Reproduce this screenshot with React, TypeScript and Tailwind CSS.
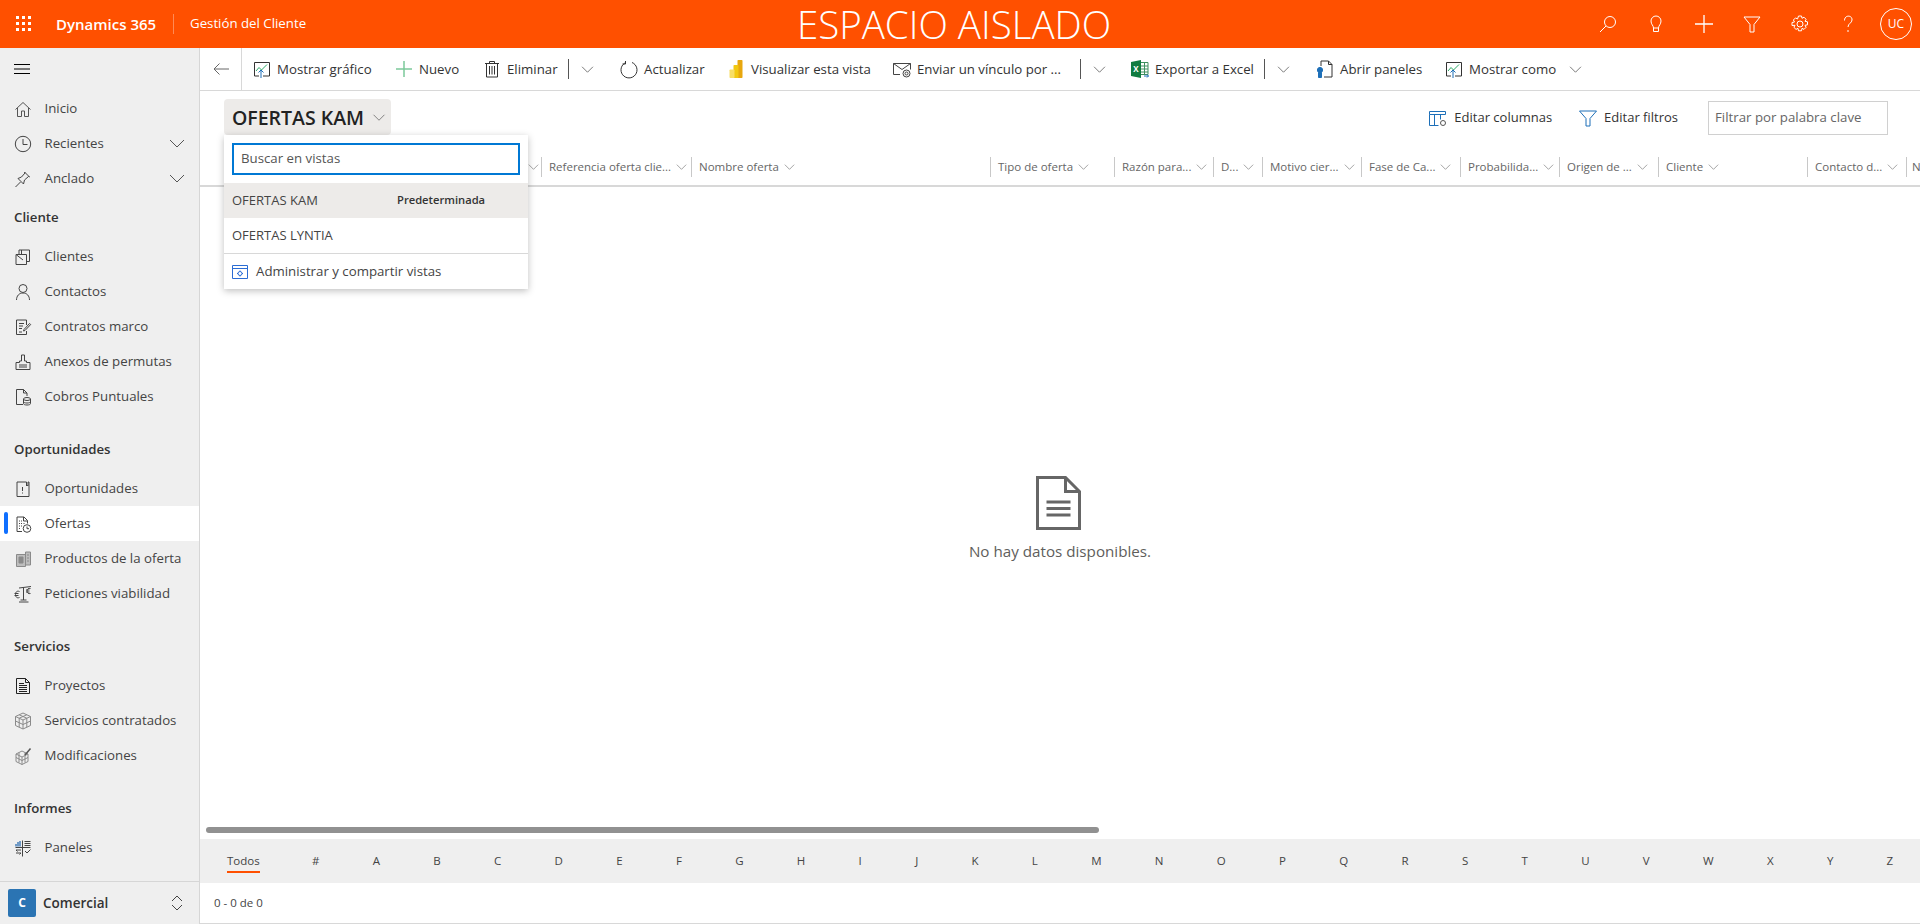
import type { ReactNode } from "react";

const FONT = "font-['Open_Sans','Liberation_Sans',sans-serif]";

function Chevron({ className }: { className: string }) {
  return (
    <svg className={className} viewBox="0 0 16 9" fill="none" stroke="currentColor" strokeWidth="1">
      <path d="M1 1l7 7 7-7" />
    </svg>
  );
}

function Glyph({ children, className = "h-[20px] w-[20px] text-[#444]" }: { children: ReactNode; className?: string }) {
  return (
    <svg className={className} viewBox="0 0 20 20" fill="none" stroke="currentColor" strokeWidth="1">
      {children}
    </svg>
  );
}

const chartIcon = (
  <Glyph className="h-[20px] w-[20px] text-[#333]">
    <path d="M7 17H2.500V3.500h15V17H11" />
    <path d="M4 12l3-3.500 2.500 2.500L15 5.500" stroke="#2aa866" />
    <path d="M9 19v-8M6.500 13.500L9 11l2.500 2.500" stroke="#1d6fb8" />
  </Glyph>
);

const sidebarIcons: Record<string, ReactNode> = {
  home: (
    <Glyph>
      <path d="M2.500 10.500L10 3.500l7.500 7M4.500 9v8.500h4V12h3v5.500h4V9" stroke="#555" />
    </Glyph>
  ),
  clock: (
    <Glyph>
      <circle cx="10" cy="10" r="7.700" />
      <path d="M10 5v5.500h4.500" />
    </Glyph>
  ),
  pin: (
    <Glyph>
      <path d="M2.500 18l5-5M5 9.500l5.500 5.500 1-4 4-3.500 1 .5-5-5 .5 1-3.500 4z" />
    </Glyph>
  ),
  clientes: (
    <Glyph>
      <path d="M3 7.500h10.500v10H3zM6 7.500V3h10.500v11.500h-3M8.500 3v4.500M3 7.500l7 5.500" />
    </Glyph>
  ),
  contacto: (
    <Glyph>
      <circle cx="10" cy="6.500" r="4" />
      <path d="M3.500 18c0-4 2.500-7 6.500-7s6.500 3 6.500 7" />
    </Glyph>
  ),
  contratos: (
    <Glyph>
      <path d="M13.500 8V3H3.500v14.500h10V14" />
      <path d="M6 6.500h5M6 9h4M6 11.500h3M6 15h3" />
      <path d="M11 12.500l5.500-6 1.200 1-5.700 6-1.500.5z" />
    </Glyph>
  ),
  anexos: (
    <Glyph>
      <path d="M3 17.500h14v-7h-3.500V9h-2V3h-3v6h-2v1.500H3zM6 13h8M6 15h8" />
    </Glyph>
  ),
  cobros: (
    <Glyph>
      <path d="M10 17.500H3.500v-15h7l3.500 3.500v3M10.500 2.500V6H14" />
      <ellipse cx="14" cy="12" rx="3.500" ry="1.500" />
      <path d="M10.500 12v4.500c0 1 1.500 1.500 3.500 1.500s3.500-.5 3.500-1.500V12M10.500 14.500c0 1 1.500 1.500 3.500 1.500s3.500-.5 3.500-1.500" />
    </Glyph>
  ),
  oportunidades: (
    <Glyph>
      <path d="M13.500 3H4v14.500h12V3h-1v4l-.8-.8-.7.8z" />
      <path d="M9.500 8v4M9.500 13.500v1" />
    </Glyph>
  ),
  ofertas: (
    <Glyph>
      <path d="M9 17.500H4V3h7l3.500 3.500v3M10.500 3v4h4" />
      <path d="M6 7h1M8 7h1M6 9.500h1M8 9.500h1M10.500 9.500h1M6 12h1M8 12h1M6 14.500h1" />
      <circle cx="14" cy="14.500" r="3.800" />
      <path d="M14 12.500v2.200h2" />
    </Glyph>
  ),
  productos: (
    <Glyph className="h-[20px] w-[20px] text-[#8a8a8a]">
      <path d="M3.500 5.500h9v12h-9zM12.500 3h5v13h-5z" fill="#bdbdbd" />
      <path d="M6 8h4v6H6zM14 6h2M14 9h2M14 12h2" fill="#8a8a8a" />
    </Glyph>
  ),
  peticiones: (
    <Glyph>
      <path d="M6 4l12-1.500M10.500 3.500V16M6 18h9.500M7.500 16h6" />
      <path d="M6.500 7.500C4 6.500 2.500 8 2.500 10.500s1.500 4 4 3M1.500 9.500h4M1.500 11.500h4" />
      <path d="M17.500 4.500c-2-.5-3.500.5-3.500 2.500s1.500 3 3.500 2.500M13 6h3.500M13 8h3.500" />
    </Glyph>
  ),
  proyectos: (
    <Glyph className="h-[20px] w-[20px] text-[#222]">
      <path d="M3.500 2.500h9l4 4v11h-13zM12.500 2.500v4h4" />
      <path d="M6 7.500h5M6 9.500h8M6 11.500h8M6 13.500h8M6 15.500h8" />
    </Glyph>
  ),
  servicios: (
    <Glyph className="h-[20px] w-[20px] text-[#8a8a8a]">
      <path d="M10 2l7.500 3.500v9L10 18l-7.500-3.500v-9zM2.500 5.500L10 9l7.500-3.500M10 9v9M2.500 10l7.500 3.500 7.500-3.500M6.200 3.800L13.800 7.200M13.800 3.800L6.200 7.200M6.200 7.200v9M13.800 7.200v9" />
    </Glyph>
  ),
  modificaciones: (
    <Glyph className="h-[20px] w-[20px] text-[#8a8a8a]">
      <path d="M9 5l6 3v7.500l-6 3-6-3V8zM3 8l6 3 6-3M9 11v7.500M3 11.500l6 3 6-3M6 6.500v10M12 6.500v10" />
      <path d="M12 9l5.500-6.500" stroke="#555" strokeWidth="1.500" />
    </Glyph>
  ),
  paneles: (
    <Glyph>
      <path d="M9.500 2.500v16M2.500 9.500h15" />
      <path d="M3 8.500V6M5 8.500V4M7 8.500V3" strokeWidth="1.300" stroke="#2b6cb0" />
      <path d="M11.500 3.500h6M11.500 5.500h6M11.500 7.500h6" />
      <path d="M3 12h5M3 12l1.500 1.500M8 15H3M8 15l-1.500 1.500" />
      <path d="M12 13l2 2 3.500-3.500" />
    </Glyph>
  ),
};

const sidebarSections = [
  {
    title: "Cliente",
    items: [
      ["clientes", "Clientes"],
      ["contacto", "Contactos"],
      ["contratos", "Contratos marco"],
      ["anexos", "Anexos de permutas"],
      ["cobros", "Cobros Puntuales"],
    ],
  },
  {
    title: "Oportunidades",
    items: [
      ["oportunidades", "Oportunidades"],
      ["ofertas", "Ofertas"],
      ["productos", "Productos de la oferta"],
      ["peticiones", "Peticiones viabilidad"],
    ],
  },
  {
    title: "Servicios",
    items: [
      ["proyectos", "Proyectos"],
      ["servicios", "Servicios contratados"],
      ["modificaciones", "Modificaciones"],
    ],
  },
  { title: "Informes", items: [["paneles", "Paneles"]] },
];

function NavRow({ iconName, label, expandable }: { iconName: string; label: string; expandable?: boolean }) {
  const active = label === "Ofertas";
  return (
    <div className={`relative flex h-[35px] items-center pl-[13px] ${active ? "bg-white" : ""}`}>
      {active && <span className="absolute left-[4px] top-[6px] h-[22px] w-[4px] rounded-sm bg-[#0f6fff]" />}
      <span className="flex w-[31.5px] shrink-0 items-center">{sidebarIcons[iconName]}</span>
      <span className="flex-1 text-[13.25px] text-[#444]">{label}</span>
      {expandable && <Chevron className="mr-[14px] h-[9px] w-[16px] text-[#555]" />}
    </div>
  );
}

function Sidebar() {
  return (
    <aside className="flex w-[200px] shrink-0 flex-col border-r border-[#d6d6d6] bg-[#efefef]">
      <div className="flex h-[42px] items-center pl-[14px]">
        <svg className="h-[10px] w-[16px] text-black" viewBox="0 0 16 10" stroke="currentColor" strokeWidth="1">
          <path d="M0 .5h16M0 5h16M0 9.500h16" />
        </svg>
      </div>
      <div className="flex flex-1 flex-col">
        <div className="pt-[1px]">
          <NavRow iconName="home" label="Inicio" />
          <NavRow iconName="clock" label="Recientes" expandable />
          <NavRow iconName="pin" label="Anclado" expandable />
        </div>
        {sidebarSections.map((section, index) => (
          <div key={section.title} className={index === 0 ? "" : "pt-[14px]"}>
            <div className="flex h-[43px] items-center pl-[14px] text-[13.25px] font-semibold text-[#333]">{section.title}</div>
            {section.items.map(([iconName, label]) => (
              <NavRow key={label} iconName={iconName} label={label} />
            ))}
          </div>
        ))}
      </div>
      <div className="flex h-[43px] items-center border-t border-[#d6d6d6] pl-[8px]">
        <span className="flex h-[28px] w-[28px] items-center justify-center rounded-[2px] bg-[#2b74b3] text-[12px] font-bold text-white">
          C
        </span>
        <span className="ml-[7px] flex-1 text-[13.5px] font-semibold text-[#333]">Comercial</span>
        <svg className="mr-[16px] h-[16px] w-[12px] text-[#444]" viewBox="0 0 12 16" fill="none" stroke="currentColor">
          <path d="M1 6l5-5 5 5M1 10l5 5 5-5" />
        </svg>
      </div>
    </aside>
  );
}

function HeaderButton({ children }: { children: ReactNode }) {
  return (
    <div className="grid h-[48px] w-[48px] place-items-center">
      <Glyph className="h-[20px] w-[20px] text-white">{children}</Glyph>
    </div>
  );
}

function TopBar() {
  return (
    <header className="flex h-[48px] shrink-0 items-center bg-[#ff5000] text-white">
      <div className="grid h-[48px] w-[48px] place-items-center">
        <svg className="h-[16px] w-[16px]" viewBox="0 0 16 16" fill="currentColor">
          {[1, 7, 13].flatMap((y) => [1, 7, 13].map((x) => <rect key={`${x}-${y}`} x={x - 1} y={y - 1} width="3" height="3" />))}
        </svg>
      </div>
      <span className="ml-[8px] w-[101px] whitespace-nowrap text-[15px] font-semibold">Dynamics 365</span>
      <span className="ml-[16px] h-[20px] w-px bg-[#ff8a55]" />
      <span className="ml-[16px] text-[13.25px]">Gestión del Cliente</span>
      <div className="flex flex-1 justify-center pl-[18px] text-[38.5px] font-light leading-[48px]">ESPACIO AISLADO</div>
      <div className="flex">
        <HeaderButton>
          <circle cx="12" cy="8" r="5.500" />
          <path d="M8 12l-6 6" />
        </HeaderButton>
        <HeaderButton>
          <path d="M7.500 14c0-2.500-2.500-3.500-2.500-7a5 5 0 0 1 10 0c0 3.500-2.500 4.500-2.500 7zM7.500 14v3.500h5V14" />
        </HeaderButton>
        <HeaderButton>
          <path d="M10 1v18M1 10h18" strokeWidth="1.300" />
        </HeaderButton>
        <HeaderButton>
          <path d="M2 3h16l-6 7.500V18H8v-7.500z" />
        </HeaderButton>
        <HeaderButton>
          <circle cx="10" cy="10" r="3" />
          <path d="M8.500 2h3l.5 2.300 2-1.100 2.100 2.100-1.100 2 2.500.5v3l-2.500.5 1.100 2-2.100 2.100-2-1.100-.5 2.500h-3l-.5-2.500-2 1.100-2.100-2.100 1.100-2L2 11.500v-3l2.500-.5-1.100-2 2.100-2.100 2 1.100z" />
        </HeaderButton>
        <HeaderButton>
          <path d="M6.500 6.500c0-6 8-5.500 7.500-.5 0 3-4 3.500-4 7M10 16v2" />
        </HeaderButton>
        <div className="grid h-[48px] w-[48px] place-items-center">
          <span className="grid h-[32px] w-[32px] place-items-center rounded-full border border-white text-[12px]">UC</span>
        </div>
      </div>
    </header>
  );
}

const commands: { label?: string; icon?: ReactNode; className: string; kind?: "split" | "chevron" }[] = [
  { label: "Mostrar gráfico", icon: chartIcon, className: "ml-[10px] w-[142px]" },
  {
    label: "Nuevo",
    icon: (
      <Glyph className="h-[20px] w-[20px] text-[#7cc99a]">
        <path d="M10 2v16M2 10h16" strokeWidth="1.500" />
      </Glyph>
    ),
    className: "w-[88px]",
  },
  {
    label: "Eliminar",
    icon: (
      <Glyph className="h-[20px] w-[20px] text-[#333]">
        <path d="M3 4.500h14M7.500 4.500V2.500h5v2M4.500 4.500V18h11V4.500M7.500 7v8.500M10 7v8.500M12.500 7v8.500" />
      </Glyph>
    ),
    className: "w-[86px]",
  },
  { kind: "split", className: "w-[51px]" },
  {
    label: "Actualizar",
    icon: (
      <Glyph className="h-[20px] w-[20px] text-[#333]">
        <path d="M7 3.500a8 8 0 1 0 6 0M6.500 2v3H3.500" />
      </Glyph>
    ),
    className: "w-[107px]",
  },
  {
    label: "Visualizar esta vista",
    icon: (
      <svg className="h-[20px] w-[20px]" viewBox="0 0 20 20">
        <rect x="11.500" y="1" width="5" height="18" rx=".8" fill="#e8a70e" />
        <rect x="7.500" y="6" width="5" height="13" rx=".8" fill="#f2c811" />
        <rect x="3.500" y="10.500" width="5" height="8.500" rx=".8" fill="#f8de66" />
      </svg>
    ),
    className: "w-[166px]",
  },
  {
    label: "Enviar un vínculo por ...",
    icon: (
      <Glyph className="h-[20px] w-[20px] text-[#444]">
        <path d="M8 15.500H1.500v-11h17v6M1.500 4.500L10 10.500l8.500-6" />
        <circle cx="14.500" cy="14.500" r="3.500" />
        <circle cx="14.500" cy="14.500" r="1.500" />
      </Glyph>
    ),
    className: "w-[187.5px]",
  },
  { kind: "split", className: "w-[50.5px]" },
  {
    label: "Exportar a Excel",
    icon: (
      <svg className="h-[20px] w-[20px]" viewBox="0 0 20 20">
        <path d="M1 3l10-2v18L1 17z" fill="#107c41" />
        <path d="M11 3.500h7v12h-7" fill="none" stroke="#3f8f5f" />
        <path d="M11 7h7M11 10h7M11 13h7M14.500 3.500v12" stroke="#3f8f5f" fill="none" />
        <text x="3.200" y="13" fontSize="8" fontWeight="700" fill="#fff" fontFamily="Open Sans">X</text>
        <path d="M14 17h4.500M17 15.500l1.500 1.500-1.500 1.500" stroke="#1d6fb8" fill="none" />
      </svg>
    ),
    className: "w-[134px]",
  },
  { kind: "split", className: "w-[51px]" },
  {
    label: "Abrir paneles",
    icon: (
      <Glyph className="h-[20px] w-[20px] text-[#333]">
        <path d="M6 7V2h7.500L17 5.500V18H9M13.500 2v3.500H17" />
        <circle cx="5" cy="11" r="2.600" fill="#1d6fb8" stroke="#1d6fb8" />
        <path d="M3.500 13.500h3v5h-3z" fill="#1d6fb8" stroke="#1d6fb8" />
      </Glyph>
    ),
    className: "w-[129px]",
  },
  { label: "Mostrar como", icon: chartIcon, className: "w-[125px]" },
  { kind: "chevron", className: "" },
];

function CommandBar() {
  return (
    <div className="flex h-[43px] shrink-0 items-center border-b border-[#d8d8d8] text-[13.25px] text-[#333]">
      <div className="flex h-full w-[42px] items-center justify-center border-r border-[#d8d8d8] px-[13px]">
        <svg className="h-[12px] w-[16px] shrink-0 text-[#666]" viewBox="0 0 16 12" fill="none" stroke="currentColor">
          <path d="M16 6H1M6.500.5L1 6l5.500 5.500" />
        </svg>
      </div>
      {commands.map((command, index) =>
        command.kind ? (
          <div key={index} className={`flex shrink-0 items-center ${command.className}`}>
            {command.kind === "split" && <span className="h-[20px] w-px bg-[#555]" />}
            <Chevron className={`${command.kind === "split" ? "ml-[12px]" : ""} h-[7px] w-[13px] text-[#555]`} />
          </div>
        ) : (
          <div key={index} className={`flex shrink-0 items-center gap-[5px] ${command.className}`}>
            <span className="shrink-0">{command.icon}</span>
            <span className="whitespace-nowrap pt-[2px]">{command.label}</span>
          </div>
        )
      )}
    </div>
  );
}

const columns = [
  { label: "", className: "w-[341px] justify-end pr-[2px]" },
  { label: "Referencia oferta clie...", className: "w-[150px]" },
  { label: "Nombre oferta", className: "w-[299px]" },
  { label: "Tipo de oferta", className: "w-[124px]" },
  { label: "Razón para...", className: "w-[99px]" },
  { label: "D...", className: "w-[49px]" },
  { label: "Motivo cier...", className: "w-[99px]" },
  { label: "Fase de Ca...", className: "w-[99px]" },
  { label: "Probabilida...", className: "w-[99px]" },
  { label: "Origen de ...", className: "w-[99px]" },
  { label: "Cliente", className: "w-[149px]" },
  { label: "Contacto d...", className: "w-[99px]" },
];

function ColumnHeader() {
  return (
    <div className="flex h-[33px] shrink-0 items-start overflow-hidden border-b-2 border-[#d8d8d8] pt-[3px] text-[11.5px] text-[#666]">
      {columns.map((column, index) => (
        <div
          key={index}
          className={`flex h-[20px] shrink-0 items-center gap-[5px] pl-[7px] ${column.className} ${
            index > 0 ? "border-l border-[#c8c8c8]" : ""
          }`}
        >
          <span className="whitespace-nowrap">{column.label}</span>
          <Chevron className="h-[6px] w-[11px] shrink-0 text-[#777]" />
        </div>
      ))}
      <div className="flex h-[20px] min-w-0 flex-1 items-center border-l border-[#c8c8c8] pl-[5px]">N</div>
    </div>
  );
}

function ViewDropdown() {
  return (
    <div className="absolute left-[24px] top-[87px] z-10 w-[304px] bg-white shadow-[0_2px_7px_rgba(0,0,0,0.25)]">
      <div className="p-[8px]">
        <div className="flex h-[32px] items-center border-2 border-[#0078d4] pl-[7px] text-[13.25px] text-[#555]">Buscar en vistas</div>
      </div>
      <div className="flex h-[35px] items-center bg-[#edebe9] pl-[8px] text-[13px] text-[#444]">
        <span className="w-[165px]">OFERTAS KAM</span>
        <span className="text-[11.2px] font-semibold text-[#333]">Predeterminada</span>
      </div>
      <div className="flex h-[35px] items-center pl-[8px] text-[13px] text-[#444]">OFERTAS LYNTIA</div>
      <div className="flex h-[36px] items-center gap-[8px] border-t border-[#d8d8d8] pl-[8px] text-[13.25px] text-[#444]">
        <svg className="h-[16px] w-[16px]" viewBox="0 0 16 16" fill="none" stroke="#2b6cd4">
          <path d="M.5 1.500h15v13H.5zM.5 4.500h15" />
          <circle cx="8" cy="9.500" r="2" />
          <path d="M8 6.500v1M8 11.500v1M5 9.500h1M10 9.500h1" />
        </svg>
        Administrar y compartir vistas
      </div>
    </div>
  );
}

const letters = "#ABCDEFGHIJKLMNOPQRSTUVWXYZ".split("");

function JumpBar() {
  return (
    <div className="flex h-[44px] shrink-0 items-center gap-[53.3px] bg-[#efefef] pl-[27px] text-[11.5px] text-[#444]">
      <span className="relative -mr-[1px]">
        Todos
        <span className="absolute -bottom-[3px] left-0 right-0 h-[2px] bg-[#ff5000]" />
      </span>
      {letters.map((letter) => (
        <span key={letter}>{letter}</span>
      ))}
    </div>
  );
}

export default function App() {
  return (
    <div className={`flex h-[924px] w-[1920px] flex-col overflow-hidden bg-white ${FONT}`}>
      <TopBar />
      <div className="flex min-h-0 flex-1">
        <Sidebar />
        <main className="relative flex min-w-0 flex-1 flex-col border-b border-[#d8d8d8]">
          <CommandBar />
          <div className="flex h-[63px] shrink-0 items-start justify-between pl-[24px] pr-[32px] pt-[8px]">
            <div className="flex h-[36px] w-[167px] items-center gap-[8px] rounded-sm bg-[#edebe9] pl-[8px]">
              <span className="whitespace-nowrap pt-[1px] text-[19.5px] font-semibold text-[#222]">OFERTAS KAM</span>
              <Chevron className="h-[7px] w-[14px] shrink-0 text-[#666]" />
            </div>
            <div className="flex items-center pt-[2px] text-[13px] text-[#333]">
              <Glyph className="h-[20px] w-[20px] text-[#1d6fb8]">
                <path d="M1.500 3.500h16v3h-16zM1.500 6.500v11h9M6.500 6.500v11M12.500 6.500v5" />
                <circle cx="15" cy="15" r="2.500" stroke="#555" />
              </Glyph>
              <span className="ml-[6px]">Editar columnas</span>
              <Glyph className="ml-[26px] h-[20px] w-[20px] text-[#1d6fb8]">
                <path d="M1.500 3h17l-6.500 7.500V18H8v-7.500z" />
              </Glyph>
              <span className="ml-[6px]">Editar filtros</span>
              <div className="ml-[30px] flex h-[34px] w-[180px] items-center border border-[#d0d0d0] pl-[6px] text-[13.25px] text-[#666]">
                Filtrar por palabra clave
              </div>
            </div>
          </div>
          <ColumnHeader />
          <div className="flex min-h-0 flex-1 flex-col items-center justify-center pt-[24px]">
            <svg className="mr-[3px] h-[54px] w-[45px] text-[#666]" viewBox="0 0 45 54" fill="none" stroke="currentColor" strokeWidth="3">
              <path d="M1.500 1.500h28l14 14v37h-42zM29.500 1.500v14h14" />
              <path d="M10.500 26h24M10.500 32.500h24M10.500 39h24" />
            </svg>
            <p className="mt-[10px] text-[15.2px] text-[#605e5c]">No hay datos disponibles.</p>
          </div>
          <div className="flex h-[12px] shrink-0 items-start pl-[6px]">
            <div className="h-[6px] w-[893px] rounded-full bg-[#919191]" />
          </div>
          <JumpBar />
          <div className="flex h-[40px] shrink-0 items-center pl-[14px] text-[11.5px] text-[#444]">0 - 0 de 0</div>
          <ViewDropdown />
        </main>
      </div>
    </div>
  );
}
